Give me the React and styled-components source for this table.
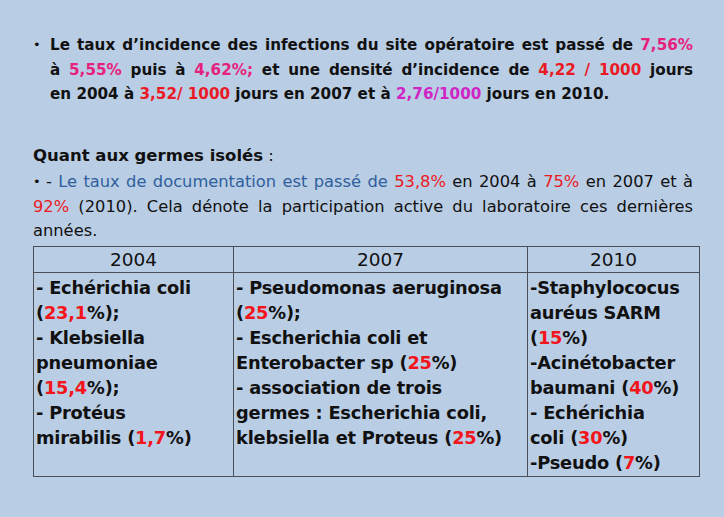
import React from 'react';
import styled, { createGlobalStyle } from 'styled-components';

const GlobalStyle = createGlobalStyle`
  html, body {
    margin: 0;
    padding: 0;
    background: #b9cde5;
  }
  body {
    font-family: "DejaVu Sans", "Liberation Sans", sans-serif;
    color: #111;
  }
`;

const Page = styled.div`
  width: 724px;
  height: 517px;
  box-sizing: border-box;
  padding: 33px 0 0 33px;
  display: flex;
  flex-direction: column;
`;

const Bullet = styled.div`
  position: relative;
  width: ${(p) => p.$width}px;
  padding-left: ${(p) => p.$indent}px;
  box-sizing: border-box;
  font-size: ${(p) => p.$size}px;
  font-weight: ${(p) => (p.$bold ? 700 : 400)};
  line-height: 24.5px;

  &::before {
    content: '•';
    position: absolute;
    left: 0;
    top: 0;
    font-weight: 400;
    font-size: 13px;
  }
`;

const Line = styled.div`
  white-space: nowrap;
  text-align: justify;
  text-align-last: ${(p) => (p.$last ? 'left' : 'justify')};
  margin-left: ${(p) => p.$shift || 0}px;
`;

const Heading = styled.div`
  font-size: 16.5px;
  line-height: 24.5px;
  margin-top: 37px;
  margin-bottom: 2px;

  b {
    font-weight: 700;
  }
`;

const Hl = styled.span`
  color: ${(p) => p.$c};
`;

const Table = styled.div`
  margin-top: 2px;
  width: 666px;
  display: grid;
  grid-template-columns: 200px 294px 172px;
  grid-template-rows: 26px 204px;
  border-top: 1px solid #4a4f57;
  border-left: 1px solid #4a4f57;
`;

const HeadCell = styled.div`
  border-right: 1px solid #4a4f57;
  border-bottom: 1px solid #4a4f57;
  display: flex;
  align-items: center;
  justify-content: center;
  font-size: 18.5px;
  font-weight: 400;
`;

const Cell = styled.div`
  border-right: 1px solid #4a4f57;
  border-bottom: 1px solid #4a4f57;
  padding: 2px 2px 0;
  font-size: 17.8px;
  font-weight: 700;
  line-height: 25px;
  white-space: nowrap;
  letter-spacing: -0.2px;
`;

const Red = styled.span`
  color: #f2161c;
`;

const Row = styled.div``;

const PINK = '#e6217d';
const RED = '#ea1a24';
const PURPLE = '#cf25c4';
const BLUE = '#2f5f9c';

export default function App() {
  return (
    <>
      <GlobalStyle />
      <Page>
        <Bullet $width={660} $indent={17} $size={15.2} $bold>
          <Line>
            Le taux d’incidence des infections du site opératoire est passé de <Hl $c={PINK}>7,56%</Hl>
          </Line>
          <Line>
            à <Hl $c={PINK}>5,55%</Hl> puis à <Hl $c={PINK}>4,62%;</Hl> et une densité d’incidence de <Hl $c={RED}>4,22 / 1000</Hl> jours
          </Line>
          <Line $last>
            en 2004 à <Hl $c={RED}>3,52/ 1000</Hl> jours en 2007 et à <Hl $c={PURPLE}>2,76/1000</Hl> jours en 2010.
          </Line>
        </Bullet>

        <Heading>
          <b>Quant aux germes isolés</b> :
        </Heading>

        <Bullet $width={660} $indent={0} $size={16.3}>
          <Line $shift={13}>
            - <Hl $c={BLUE}>Le taux de documentation est passé de</Hl> <Hl $c={RED}>53,8%</Hl> en 2004 à <Hl $c={RED}>75%</Hl> en 2007 et à
          </Line>
          <Line>
            <Hl $c={RED}>92%</Hl> (2010). Cela dénote la participation active du laboratoire ces dernières
          </Line>
          <Line $last>années.</Line>
        </Bullet>

        <Table>
          <HeadCell>2004</HeadCell>
          <HeadCell>2007</HeadCell>
          <HeadCell>2010</HeadCell>
          <Cell>
            <Row>- Echérichia coli</Row>
            <Row>(<Red>23,1</Red>%);</Row>
            <Row>- Klebsiella</Row>
            <Row>pneumoniae</Row>
            <Row>(<Red>15,4</Red>%);</Row>
            <Row>- Protéus</Row>
            <Row>mirabilis (<Red>1,7</Red>%)</Row>
          </Cell>
          <Cell>
            <Row>- Pseudomonas aeruginosa</Row>
            <Row>(<Red>25</Red>%);</Row>
            <Row>- Escherichia coli et</Row>
            <Row>Enterobacter sp (<Red>25</Red>%)</Row>
            <Row>- association de trois</Row>
            <Row>germes : Escherichia coli,</Row>
            <Row>klebsiella et Proteus (<Red>25</Red>%)</Row>
          </Cell>
          <Cell>
            <Row>-Staphylococus</Row>
            <Row>auréus SARM</Row>
            <Row>(<Red>15</Red>%)</Row>
            <Row>-Acinétobacter</Row>
            <Row>baumani (<Red>40</Red>%)</Row>
            <Row>- Echérichia</Row>
            <Row>coli (<Red>30</Red>%)</Row>
            <Row>-Pseudo (<Red>7</Red>%)</Row>
          </Cell>
        </Table>
      </Page>
    </>
  );
}
